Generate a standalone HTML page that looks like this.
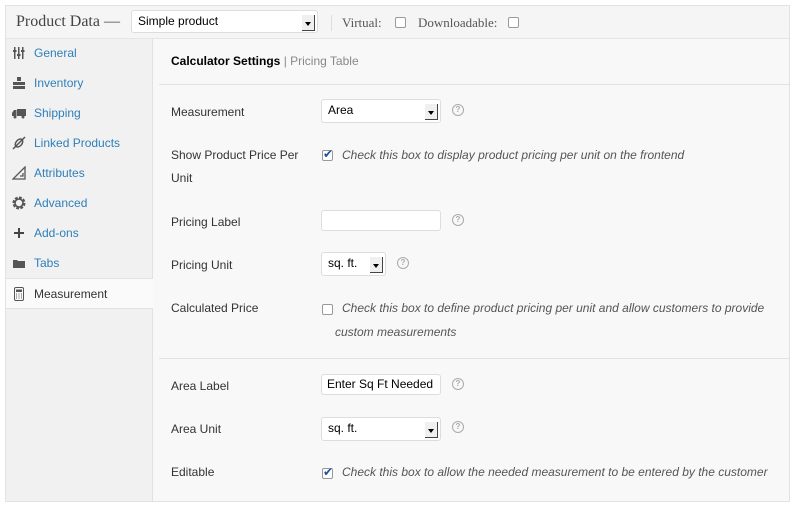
<!DOCTYPE html><html><head><style>
*{box-sizing:border-box;margin:0;padding:0}
body{width:794px;height:506px;background:#fff;font-family:"Liberation Sans",sans-serif;font-size:12px;color:#333;position:relative;overflow:hidden}
.box{position:absolute;left:5px;top:5px;width:785px;height:497px;border:1px solid #e2e2e2;background:#f8f8f8}
.hdr{position:absolute;left:0;top:0;width:783px;height:33px;background:#f5f5f5;border-bottom:1px solid #e5e5e5}
.side{position:absolute;left:0;top:33px;width:147px;height:462px;background:#f1f1f1;border-right:1px solid #e2e2e2}
.a{position:absolute;font-size:12px}
.ni{position:absolute;left:0;width:147px;height:30px;line-height:30px;padding-left:28px;color:#2e7fba;font-size:12px}
.ni svg{position:absolute;left:6px;top:8px;width:14px;height:14px}
.sel{position:absolute;background:#fff;border:1px solid #ddd;border-radius:3px;height:24px;line-height:20px;padding-left:6px;color:#000;font-size:12px}
.sel .ar{position:absolute;right:2px;top:4px;width:13px;height:16px;border-right:1px solid #444;border-bottom:1px solid #444;background:#f0f0f0}
.sel .ar:after{content:"";position:absolute;left:3px;top:7px;border:3px solid transparent;border-top:4px solid #000}
.q{position:absolute;width:12px;height:12px;border:1px solid #aaa;border-radius:50%;font-size:8px;color:#aaa;text-align:center;line-height:10px;font-weight:bold}
.cb{position:absolute;width:11px;height:11px;border:1px solid #999;border-radius:2px;background:#fff}
.ck:after{content:"✔";position:absolute;left:0;top:-4px;color:#1e4fa0;font-size:12px}
.it{font-style:italic;color:#555}
.lab{position:absolute;left:171px;color:#333}
</style></head><body>
<div class="box">
<div class="hdr"></div>
<div class="side"></div>
<div class="a" style="left:10px;top:7px;font-family:'Liberation Serif',serif;font-size:16px;color:#444">Product Data —</div>
<div class="sel" style="left:125px;top:4px;width:187px;height:23px">Simple product<span class="ar"></span></div>
<div style="position:absolute;left:325px;top:9px;width:1px;height:16px;background:#ddd"></div>
<div class="a" style="left:336px;top:9px;font-family:'Liberation Serif',serif;font-size:13px;color:#555">Virtual:</div>
<div class="cb" style="left:389px;top:11px"></div>
<div class="a" style="left:412px;top:9px;font-family:'Liberation Serif',serif;font-size:13px;color:#555">Downloadable:</div>
<div class="cb" style="left:502px;top:11px"></div>

<div class="ni" style="top:32px"><svg viewBox="0 0 14 14" fill="#555"><rect x="2" y="1" width="1.5" height="12"/><rect x="6" y="1" width="1.5" height="12"/><rect x="10" y="1" width="1.5" height="12"/><rect x="1" y="4" width="3.5" height="2"/><rect x="5" y="8" width="3.5" height="2"/><rect x="9" y="4" width="3.5" height="2"/></svg>General</div>
<div class="ni" style="top:62px"><svg viewBox="0 0 14 14" fill="#555"><rect x="5" y="1" width="4" height="4"/><rect x="1" y="6" width="4" height="3"/><rect x="5" y="6" width="4" height="3"/><rect x="9" y="6" width="4" height="3"/><rect x="1" y="10" width="4" height="3"/><rect x="5" y="10" width="4" height="3"/><rect x="9" y="10" width="4" height="3"/></svg>Inventory</div>
<div class="ni" style="top:92px"><svg viewBox="0 0 14 14" fill="#555"><rect x="5" y="3" width="9" height="7"/><path d="M0 7 L2 4 H4.5 V10 H0Z"/><circle cx="3" cy="11" r="1.5"/><circle cx="11" cy="11" r="1.5"/></svg>Shipping</div>
<div class="ni" style="top:122px"><svg viewBox="0 0 14 14" fill="none" stroke="#555" stroke-width="1.5"><ellipse cx="7" cy="7" rx="3" ry="4.5" transform="rotate(40 7 7)"/><path d="M1 13 L13 1"/></svg>Linked Products</div>
<div class="ni" style="top:152px"><svg viewBox="0 0 14 14" fill="none" stroke="#555" stroke-width="1.3"><path d="M1 13 H13 V1 Z"/><path d="M8 10 H11 V7"/></svg>Attributes</div>
<div class="ni" style="top:182px"><svg viewBox="0 0 14 14"><circle cx="7" cy="7" r="5" fill="none" stroke="#555" stroke-width="3" stroke-dasharray="2.6 1.3"/><circle cx="7" cy="7" r="4" fill="none" stroke="#555" stroke-width="1.6"/></svg>Advanced</div>
<div class="ni" style="top:212px"><svg viewBox="0 0 14 14" fill="#444"><rect x="6" y="2" width="2" height="10"/><rect x="2" y="6" width="10" height="2"/></svg>Add-ons</div>
<div class="ni" style="top:242px"><svg viewBox="0 0 14 14" fill="#555"><path d="M1 4 H5 L6 5 H13 V12 H1Z"/></svg>Tabs</div>
<div class="ni" style="top:272px;background:#fafafa;border-top:1px solid #e2e2e2;border-bottom:1px solid #e2e2e2;color:#333;height:31px"><svg viewBox="0 0 14 14" fill="none" stroke="#555"><rect x="2.5" y="0.5" width="9" height="13" rx="1.5"/><rect x="4" y="2.5" width="6" height="2.5" fill="#555" stroke="none"/><path d="M4 7h1M6.5 7h1M9 7h1M4 9h1M6.5 9h1M9 9h1M4 11h1M6.5 11h1M9 11h1"/></svg>Measurement</div>
</div>

<div class="a" style="left:171px;top:54px;font-weight:bold;color:#000">Calculator Settings <span style="font-weight:normal;color:#888">| Pricing Table</span></div>
<div style="position:absolute;left:159px;top:84px;width:630px;height:1px;background:#e2e2e2"></div>

<div class="lab" style="top:105px">Measurement</div>
<div class="sel" style="left:321px;top:99px;width:120px">Area<span class="ar"></span></div>
<div class="q" style="left:452px;top:104px">?</div>

<div class="lab" style="top:149px;line-height:23px;margin-top:-5px">Show Product Price Per<br>Unit</div>
<div class="cb ck" style="left:322px;top:150px"></div>
<div class="a it" style="left:342px;top:148px">Check this box to display product pricing per unit on the frontend</div>

<div class="lab" style="top:215px">Pricing Label</div>
<div class="sel" style="left:321px;top:210px;width:120px;height:21px"></div>
<div class="q" style="left:452px;top:214px">?</div>

<div class="lab" style="top:258px">Pricing Unit</div>
<div class="sel" style="left:321px;top:252px;width:65px">sq. ft.<span class="ar"></span></div>
<div class="q" style="left:397px;top:257px">?</div>

<div class="lab" style="top:301px">Calculated Price</div>
<div class="cb" style="left:322px;top:304px"></div>
<div class="a it" style="left:342px;top:301px;line-height:24px;margin-top:-5px">Check this box to define product pricing per unit and allow customers to provide<br><span style="margin-left:-7px">custom measurements</span></div>

<div style="position:absolute;left:159px;top:358px;width:630px;height:1px;background:#e2e2e2"></div>

<div class="lab" style="top:379px">Area Label</div>
<div class="sel" style="left:321px;top:374px;width:120px;height:21px;line-height:18px;padding-left:5px">Enter Sq Ft Needed</div>
<div class="q" style="left:452px;top:378px">?</div>

<div class="lab" style="top:422px">Area Unit</div>
<div class="sel" style="left:321px;top:417px;width:120px">sq. ft.<span class="ar"></span></div>
<div class="q" style="left:452px;top:421px">?</div>

<div class="lab" style="top:465px">Editable</div>
<div class="cb ck" style="left:322px;top:468px"></div>
<div class="a it" style="left:342px;top:465px">Check this box to allow the needed measurement to be entered by the customer</div>
</body></html>
